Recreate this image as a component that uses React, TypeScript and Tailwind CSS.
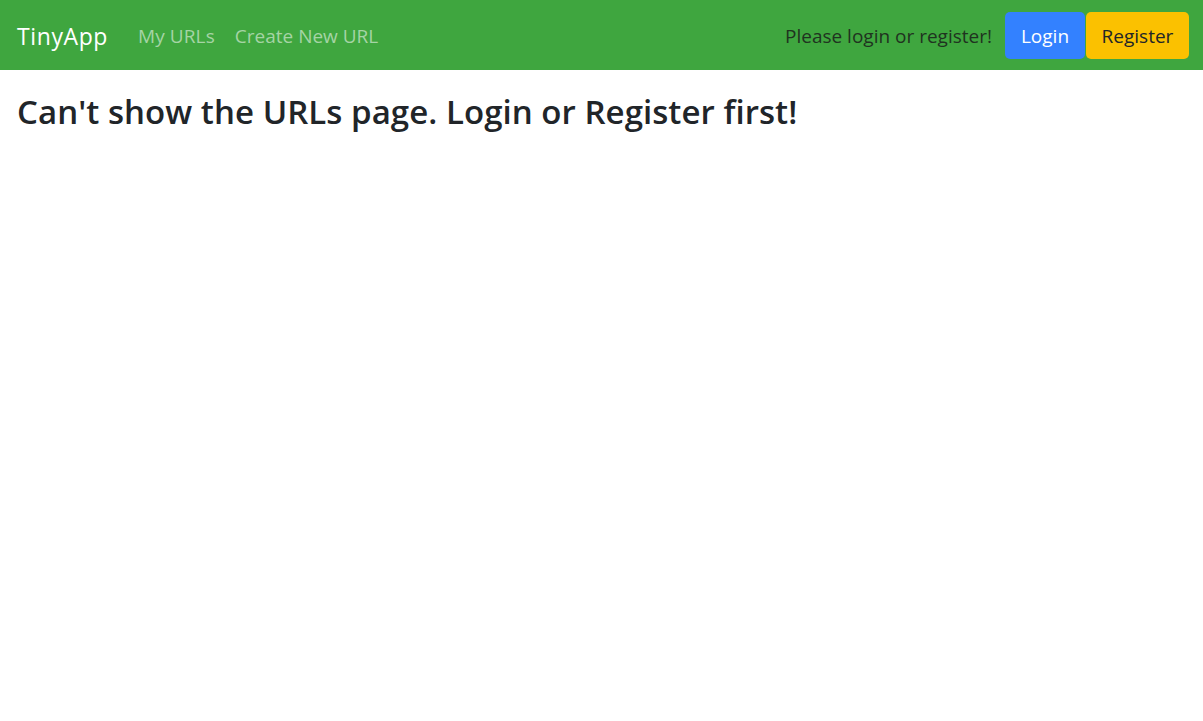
import React from 'react';

const font = { fontFamily: '"Open Sans", "Noto Sans", Arial, sans-serif' };

const App: React.FC = () => {
  return (
    <div className="min-h-screen bg-white text-[#212529]" style={font}>
      {/* Navbar */}
      <nav className="h-[70px] bg-[#3fa63f] flex items-center justify-between pl-[17px] pr-[14px]">
        <div className="flex items-center pt-[2px]">
          <a href="#" className="text-[23px] text-white mr-[30px] tracking-[0.6px]">TinyApp</a>
          <a href="#" className="text-[19px] text-[#a5d4a5] mr-[20px] tracking-[0.1px]">My URLs</a>
          <a href="#" className="text-[19px] text-[#a5d4a5]">Create New URL</a>
        </div>
        <div className="flex items-center">
          <span className="text-[19px] text-[#1f3320] mr-[13px] pt-[2px]">Please login or register!</span>
          <button className="h-[47px] w-[80px] pt-[2px] bg-[#3381ff] text-white text-[19px] rounded-[5px]">Login</button>
          <button className="h-[47px] w-[103px] pt-[2px] ml-px bg-[#fbc100] text-[#212529] text-[19px] rounded-[5px]">Register</button>
        </div>
      </nav>

      {/* Main */}
      <main className="px-[17px] pt-[21px]">
        <h2 className="text-[33px] font-semibold leading-tight tracking-[0.05px]">
          Can't show the URLs page. Login or Register first!
        </h2>
      </main>
    </div>
  );
};

export default App;
